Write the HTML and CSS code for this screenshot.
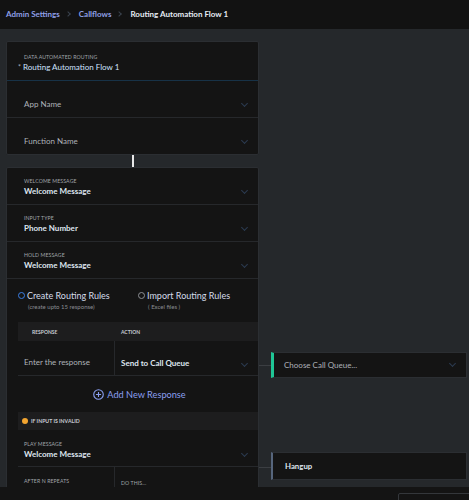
FILE: index.html
```html
<!DOCTYPE html>
<html lang="en">
<head>
<meta charset="UTF-8">
<meta name="viewport" content="width=device-width, initial-scale=1.0">
<title>Routing Automation Flow 1</title>
<link rel="stylesheet" href="styles.css">
</head>
<body>
    <div class="topbar">
        <a class="crumb">Admin Settings</a>
        <span class="sep"></span>
        <a class="crumb">Callflows</a>
        <span class="sep"></span>
        <span class="crumb current">Routing Automation Flow 1</span>
    </div>

    <div class="canvas">
        <div class="flow">
            <div class="card">
                <div class="card-head">
                    <div class="label">DATA AUTOMATED ROUTING</div>
                    <div class="title"><span class="star">*</span> Routing Automation Flow 1</div>
                </div>
                <div class="select-row">
                    <span class="placeholder">App Name</span>
                    <span class="chev"></span>
                </div>
                <div class="select-row last">
                    <span class="placeholder">Function Name</span>
                    <span class="chev"></span>
                </div>
            </div>

            <div class="link"></div>

            <div class="card">
                <div class="field">
                    <div>
                        <div class="label">WELCOME MESSAGE</div>
                        <div class="value">Welcome Message</div>
                    </div>
                    <span class="chev"></span>
                </div>
                <div class="field">
                    <div>
                        <div class="label">INPUT TYPE</div>
                        <div class="value">Phone Number</div>
                    </div>
                    <span class="chev"></span>
                </div>
                <div class="field">
                    <div>
                        <div class="label">HOLD MESSAGE</div>
                        <div class="value">Welcome Message</div>
                    </div>
                    <span class="chev"></span>
                </div>

                <div class="radios">
                    <div class="radio on">
                        <span class="dot"></span>
                        <div>
                            <div class="radio-title">Create Routing Rules</div>
                            <div class="radio-sub">(create upto 15 response)</div>
                        </div>
                    </div>
                    <div class="radio">
                        <span class="dot"></span>
                        <div>
                            <div class="radio-title">Import Routing Rules</div>
                            <div class="radio-sub">( Excel files )</div>
                        </div>
                    </div>
                </div>

                <div class="table">
                    <div class="thead">
                        <div class="col-a">RESPONSE</div>
                        <div class="col-b">ACTION</div>
                    </div>
                    <div class="trow">
                        <div class="col-a placeholder">Enter the response</div>
                        <div class="col-b">
                            <span class="value">Send to Call Queue</span>
                            <span class="chev"></span>
                        </div>
                    </div>
                </div>

                <div class="add">
                    <svg width="11" height="11" viewBox="0 0 12 12"><circle cx="6" cy="6" r="5.2" fill="none" stroke="#8a9ff0" stroke-width="1.2"/><path d="M6 3.2v5.6M3.2 6h5.6" stroke="#8a9ff0" stroke-width="1.2"/></svg>
                    Add New Response
                </div>

                <div class="invalid">
                    <span class="warn"></span>
                    IF INPUT IS INVALID
                </div>

                <div class="field inset">
                    <div>
                        <div class="label">PLAY MESSAGE</div>
                        <div class="value">Welcome Message</div>
                    </div>
                    <span class="chev"></span>
                </div>

                <div class="repeat">
                    <div class="col-a label">AFTER N REPEATS</div>
                    <div class="col-b label">DO THIS...</div>
                </div>
            </div>
        </div>

        <!-- nodes attached to the right of the flow -->
        <div class="wire" style="top: 336px;"></div>
        <div class="node queue" style="top: 323px;">
            <span class="placeholder">Choose Call Queue...</span>
            <span class="chev"></span>
        </div>

        <div class="wire" style="top: 438px;"></div>
        <div class="node hangup" style="top: 423px;">
            <span class="value">Hangup</span>
        </div>
    </div>

    <div class="bottombar">
        <div class="bottom-box"></div>
    </div>
</body>
</html>
```

FILE: styles.css
```css
* {
    box-sizing: border-box;
}
body {
    margin: 0;
    padding: 0;
    font-family: 'Lato', 'Open Sans', sans-serif;
    background: #25282b;
    width: 469px;
    height: 500px;
    overflow: hidden;
}
.topbar {
    height: 29px;
    background: #121212;
    display: flex;
    align-items: center;
    padding: 0 0 2px 6px;
    font-size: 8px;
    font-weight: bold;
}
.crumb {
    color: #8e9fe6;
}
.crumb.current {
    color: #e6ecf5;
}
.sep {
    width: 4px;
    height: 4px;
    border-right: 1px solid #3a424e;
    border-top: 1px solid #3a424e;
    transform: rotate(45deg);
    margin: 0 9px 0 6px;
}
.canvas {
    position: relative;
    height: 458px;
    overflow: hidden;
}
.flow {
    padding: 12px 0 0 6px;
    width: 259px;
}
.card {
    background: #141414;
    border: 1px solid #2b2e32;
    border-radius: 2px;
}
.label {
    font-size: 5.2px;
    line-height: 8px;
    color: #a0a4aa;
    letter-spacing: 0.1px;
}
.value {
    font-size: 8px;
    line-height: 12px;
    font-weight: bold;
    color: #dfe6f0;
}
.placeholder {
    font-size: 8px;
    line-height: 12px;
    color: #aeb2b8;
}
.chev {
    width: 5px;
    height: 5px;
    border-right: 1px solid #2c3b50;
    border-bottom: 1px solid #2c3b50;
    transform: rotate(45deg);
    margin-right: 11px;
    flex-shrink: 0;
}
.card-head {
    height: 39px;
    padding: 11px 0 0 11px;
    border-bottom: 1px solid #173247;
}
.card-head .label {
    padding-left: 6px;
}
.title {
    font-size: 8px;
    line-height: 12px;
    color: #cfe3ff;
}
.star {
    color: #aab;
    font-size: 7px;
}
.select-row {
    height: 37px;
    display: flex;
    align-items: center;
    justify-content: space-between;
    padding: 10px 0 0 17px;
    border-bottom: 1px solid #26282b;
}
.select-row .chev {
    margin-bottom: 2px;
}
.select-row.last {
    border-bottom: none;
    height: 36px;
}
.link {
    width: 2px;
    height: 12px;
    background: #e8e8e8;
    margin-left: 126px;
}
.field {
    height: 37px;
    display: flex;
    align-items: center;
    justify-content: space-between;
    padding: 1px 0 0 17px;
    border-bottom: 1px solid #26282b;
}
.field .chev {
    margin-top: 7px;
}
.field.inset {
    margin-left: 11px;
    padding: 3px 0 0 6px;
}
.radios {
    display: flex;
    padding: 10px 0 0 11px;
    height: 43px;
}
.radio {
    display: flex;
    align-items: flex-start;
    width: 122px;
}
.radio .dot {
    width: 7px;
    height: 7px;
    border-radius: 50%;
    border: 1px solid #8c8f94;
    margin: 3px 2px 0 0;
}
.radio.on .dot {
    border: 1.5px solid #3b7fe6;
}
.radio-title {
    font-size: 9px;
    line-height: 13px;
    color: #d4dcea;
}
.radio-sub {
    font-size: 6px;
    line-height: 9px;
    color: #8a8d92;
    margin-left: 1px;
}
.table {
    margin-left: 11px;
}
.thead {
    height: 19px;
    background: #1d1d1e;
    display: flex;
    align-items: center;
    font-size: 5px;
    font-weight: bold;
    color: #c7cbd2;
}
.thead .col-a {
    padding-left: 14px;
}
.col-a {
    width: 97px;
    padding-left: 6px;
}
.col-b {
    flex: 1;
    padding-left: 6px;
}
.trow {
    height: 35px;
    display: flex;
    border-bottom: 1px solid #26282b;
}
.trow .col-a {
    display: flex;
    align-items: center;
    border-right: 1px solid #26282b;
    padding-top: 8px;
}
.trow .col-b {
    display: flex;
    align-items: center;
    justify-content: space-between;
    padding-top: 10px;
}
.add {
    height: 36px;
    display: flex;
    align-items: center;
    justify-content: center;
    gap: 3px;
    font-size: 9.2px;
    color: #8a9ff0;
    padding: 0 0 0 14px;
}
.add svg {
    margin-top: 1px;
}
.invalid {
    margin-left: 11px;
    height: 18px;
    background: #1d1d1e;
    display: flex;
    align-items: center;
    padding-left: 4px;
    font-size: 5.2px;
    font-weight: bold;
    color: #c7cbd2;
}
.warn {
    width: 6px;
    height: 6px;
    border-radius: 50%;
    background: #f3a530;
    margin-right: 3px;
}
.repeat {
    margin-left: 11px;
    height: 40px;
    display: flex;
}
.repeat .col-a {
    border-right: 1px solid #26282b;
    padding-top: 10px;
}
.repeat .col-b {
    padding-top: 12px;
}
.wire {
    position: absolute;
    left: 259px;
    width: 12px;
    height: 1px;
    background: #3b3e42;
}
.node {
    position: absolute;
    left: 271px;
    width: 196px;
    background: #141414;
    border: 1px solid #2b2e32;
    display: flex;
    align-items: center;
    justify-content: space-between;
}
.node.queue {
    height: 26px;
    border-left: 3px solid #1fc595;
    padding-left: 10px;
}
.node.queue .chev {
    margin: 0 11px 4px 0;
}
.node.hangup {
    height: 28px;
    border-left: 2px solid #56657c;
    padding-left: 12px;
}
.node.hangup .value {
    font-size: 7.8px;
}
.bottombar {
    height: 13px;
    background: #141414;
    position: relative;
}
.bottom-box {
    position: absolute;
    left: 398px;
    top: 6px;
    width: 80px;
    height: 20px;
    border: 1px solid #34373b;
    border-radius: 2px;
}
```
